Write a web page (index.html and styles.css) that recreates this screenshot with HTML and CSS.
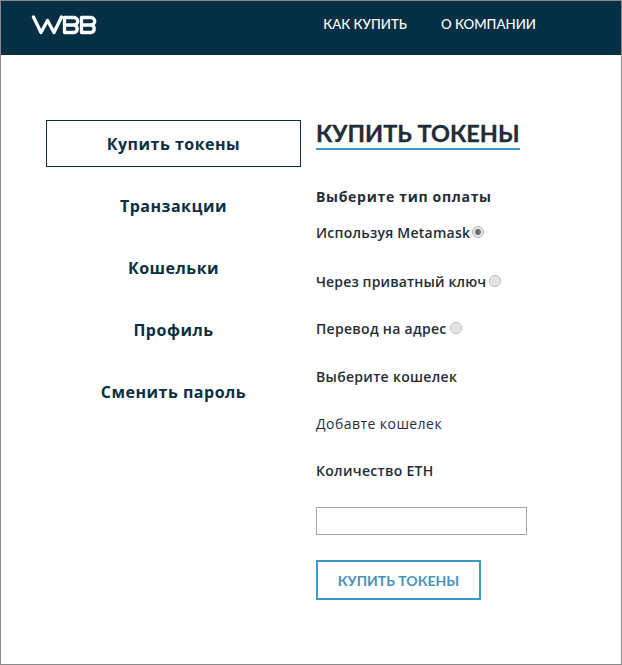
FILE: index.html
```html
<!DOCTYPE html>
<html lang="ru">
<head>
<meta charset="utf-8">
<title>Купить токены</title>
<link rel="stylesheet" href="styles.css">
</head>
<body>
<div class="frame">
  <header class="topbar">
    <svg class="logo" width="66" height="20" viewBox="0 0 66 20" aria-label="WBB">
      <g fill="none" stroke="#fff" stroke-width="3.3" stroke-linejoin="round" stroke-linecap="round">
        <path d="M2.5 2 L10 17.5 L16.5 5.5 L23 17.5 L30.5 2"/>
        <path d="M33.5 2.5 H43 A3.7 3.7 0 0 1 43 10 A3.8 3.8 0 0 1 43 17.5 H33.5 Z M33.5 10 H43"/>
        <path d="M50.5 2.5 H60 A3.7 3.7 0 0 1 60 10 A3.8 3.8 0 0 1 60 17.5 H50.5 Z M50.5 10 H60"/>
      </g>
    </svg>
    <nav class="topnav">
      <a>КАК КУПИТЬ</a>
      <a>О КОМПАНИИ</a>
    </nav>
  </header>
  <main class="layout">
    <aside class="side">
      <a class="side-item active">Купить токены</a>
      <a class="side-item">Транзакции</a>
      <a class="side-item">Кошельки</a>
      <a class="side-item">Профиль</a>
      <a class="side-item">Сменить пароль</a>
    </aside>
    <section class="content">
      <h1 class="title">КУПИТЬ ТОКЕНЫ</h1>
      <div class="label first">Выберите тип оплаты</div>
      <label class="opt o1">Используя Metamask<input class="radio" type="radio" name="pay" checked></label>
      <label class="opt o2">Через приватный ключ<input class="radio" type="radio" name="pay"></label>
      <label class="opt o3">Перевод на адрес<input class="radio" type="radio" name="pay"></label>
      <div class="label l2">Выберите кошелек</div>
      <div class="plain">Добавте кошелек</div>
      <div class="label l3">Количество ETH</div>
      <input class="amount" type="text">
      <button class="buy" type="button">КУПИТЬ ТОКЕНЫ</button>
    </section>
  </main>
</div>
</body>
</html>
```
FILE: styles.css
```css
* { box-sizing: border-box; }
html, body { margin: 0; padding: 0; background: #fff; }
.frame {
  width: 622px;
  height: 665px;
  border: 1px solid #8a8a8a;
  overflow: hidden;
  font-family: "Open Sans", sans-serif;
  color: #1f2d36;
}
.topbar {
  height: 54px;
  background: #042f44;
  display: flex;
  align-items: flex-start;
  justify-content: space-between;
  padding: 14px 85px 0 30px;
}
.logo { display: block; }
.topnav {
  display: flex;
  gap: 34px;
  font-family: Lato, sans-serif;
  font-size: 13.3px;
  line-height: 18px;
  font-weight: 500;
  color: #fff;
}
.layout {
  display: flex;
  padding: 65px 0 0 45px;
}
.side {
  width: 255px;
  display: flex;
  flex-direction: column;
  gap: 15px;
}
.side-item {
  height: 47px;
  display: flex;
  align-items: center;
  justify-content: center;
  border: 1px solid transparent;
  font-size: 16px;
  letter-spacing: 0.5px;
  font-weight: 700;
  color: #0b2f42;
}
.side-item.active { border-color: #042f44; }
.content {
  margin-left: 15px;
  display: flex;
  flex-direction: column;
  align-items: flex-start;
  font-size: 14px;
  line-height: 18px;
}
.title {
  margin: 0;
  font-family: Lato, sans-serif;
  font-size: 23.5px;
  line-height: 26px;
  padding-bottom: 2px;
  font-weight: 700;
  -webkit-text-stroke: 0.3px #1f2d36;
  color: #1f2d36;
  border-bottom: 2px solid #3b9ac6;
}
.label { font-weight: 700; letter-spacing: 0.7px; }
.opt { font-weight: 600; letter-spacing: 0.25px; display: flex; align-items: flex-start; }
.first { margin-top: 38px; }
.o1 { margin-top: 18px; }
.o2 { margin-top: 31px; letter-spacing: 0.15px; }
.o3 { margin-top: 29px; letter-spacing: 0.3px; }
.l2 { margin-top: 30px; font-weight: 600; letter-spacing: 0.3px; }
.plain { margin-top: 28px; font-size: 14px; line-height: 19px; font-weight: 400; letter-spacing: 0.45px; }
.l3 { margin-top: 29px; font-weight: 600; letter-spacing: 0.3px; }
.radio {
  appearance: none;
  width: 12px;
  height: 12px;
  margin: 2px 0 0 2px;
  border-radius: 50%;
  border: 1px solid #b4b4b4;
  background: radial-gradient(circle, #dcdcdc, #f0f0f0);
}
.o2 .radio, .o3 .radio { margin-left: 3px; }
.radio:checked {
  background: radial-gradient(circle, #6e6e6e 0 2.5px, #e6e6e6 3.5px);
}
.amount {
  margin-top: 27px;
  width: 211px;
  height: 28px;
  border: 1px solid #a6a6a6;
  background: #fff;
}
.buy {
  margin-top: 25px;
  width: 165px;
  height: 40px;
  border: 2px solid #3b9ac6;
  background: #fff;
  font-family: Lato, sans-serif;
  font-size: 14px;
  font-weight: 700;
  color: #4a93b8;
}
```
